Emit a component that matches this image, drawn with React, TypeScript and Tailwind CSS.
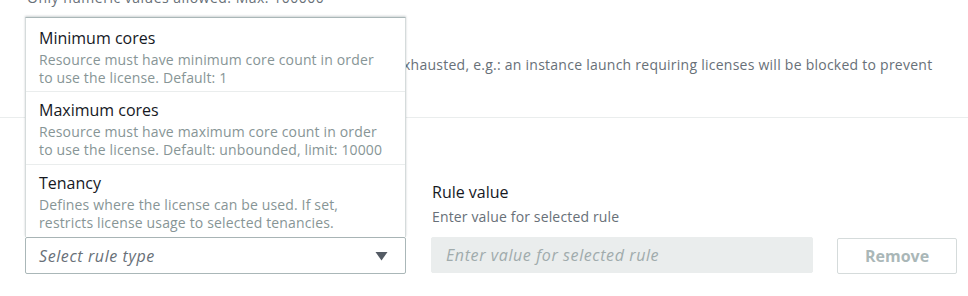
import { useState } from "react";

interface RuleOption {
  title: string;
  description: string;
}

const ruleOptions: RuleOption[] = [
  {
    title: "Minimum cores",
    description:
      "Resource must have minimum core count in order to use the license. Default: 1",
  },
  {
    title: "Maximum cores",
    description:
      "Resource must have maximum core count in order to use the license. Default: unbounded, limit: 10000",
  },
  {
    title: "Tenancy",
    description:
      "Defines where the license can be used. If set, restricts license usage to selected tenancies.",
  },
];

function CaretDown() {
  return (
    <svg width="13" height="10" viewBox="0 0 13 10" className="flex-shrink-0">
      <path d="M0.5 1h12L6.5 9.5z" fill="#545b64" />
    </svg>
  );
}

export default function App() {
  const [open] = useState(true);

  return (
    <div
      className="w-[968px] h-[296px] overflow-hidden bg-white text-[#16191f]"
      style={{ fontFamily: '"Open Sans", "Noto Sans", sans-serif' }}
    >
      {/* Limit settings (scrolled partially out of view) */}
      <div className="px-[27px] pb-[22px]">
        <p className="-mt-[12px] text-[14px] leading-[20px] tracking-[0.5px] text-[#687078]">
          Only numeric values allowed. Max: 100000
        </p>
        <div className="mt-[19px] text-[16px] leading-[22px]">Enforce license limit</div>
        <p className="mt-[6px] max-w-[912px] text-[14px] leading-[20px] tracking-[0.25px] text-[#687078]">
          When checked, license usage is blocked once a limit is exhausted, e.g.: an
          instance launch requiring licenses will be blocked to prevent license overuse.
        </p>
      </div>

      <div className="border-t border-[#eaeded]" />

      {/* Rules */}
      <div className="px-[25px] pt-[12px]">
        <h3 className="text-[18px] leading-[24px] font-bold">Rules</h3>

        <div className="mt-[27px] grid grid-cols-[381px_382px_120px] gap-x-[25px]">
          <div className="flex flex-col">
            <div className="text-[16px] leading-[22px] pl-[2px]">Rule type</div>
            <div className="mt-[4px] text-[14px] leading-[20px] tracking-[0.15px] text-[#687078] pl-[2px]">
              Select the rule type
            </div>
            <div className="relative mt-[10px]">
              {open && (
                <div className="absolute left-0 bottom-full w-[381px] bg-white border border-b-0 border-[#d5dbdb] border-t-[#aab7b8] shadow-[0_-1px_2px_rgba(0,28,36,0.2)]">
                  {ruleOptions.map((opt, i) => (
                    <div
                      key={opt.title}
                      className={`pl-[13px] pr-[18px] ${
                        i === 0 ? "pt-[9px] pb-[4px]" : "pt-[7px] pb-[5px]"
                      } ${i < ruleOptions.length - 1 ? "border-b border-[#eaeded]" : ""}`}
                    >
                      <div className="text-[16px] leading-[22px] text-[#16191f]">{opt.title}</div>
                      <div className="mt-[2px] text-[14px] leading-[18px] tracking-[0.15px] text-[#879596]">
                        {opt.description}
                      </div>
                    </div>
                  ))}
                </div>
              )}
              <div className="h-[37px] flex items-center justify-between pl-[13px] pr-[17px] border border-[#aab7b8] rounded-[2px] bg-white">
                <span className="italic text-[16px] tracking-[0.6px] text-[#687078]">Select rule type</span>
                <CaretDown />
              </div>
            </div>
          </div>

          <div className="flex flex-col">
            <div className="text-[16px] leading-[22px] pl-[1px]">Rule value</div>
            <div className="mt-[4px] text-[14px] leading-[20px] tracking-[0.15px] text-[#687078] pl-[1px]">
              Enter value for selected rule
            </div>
            <input
              disabled
              placeholder="Enter value for selected rule"
              className="mt-[10px] h-[36px] w-full px-[14px] rounded-[2px] border border-[#eaeded] bg-[#eaeded] italic text-[16px] tracking-[0.6px] placeholder:text-[#a0abac]"
            />
          </div>

          <div className="flex flex-col justify-end">
            <button
              disabled
              className="ml-[-1px] h-[36px] w-[120px] rounded-[2px] border border-[#d5dbdb] bg-white text-[16px] font-bold text-[#aab7b8]"
            >
              Remove
            </button>
          </div>
        </div>
      </div>
    </div>
  );
}
